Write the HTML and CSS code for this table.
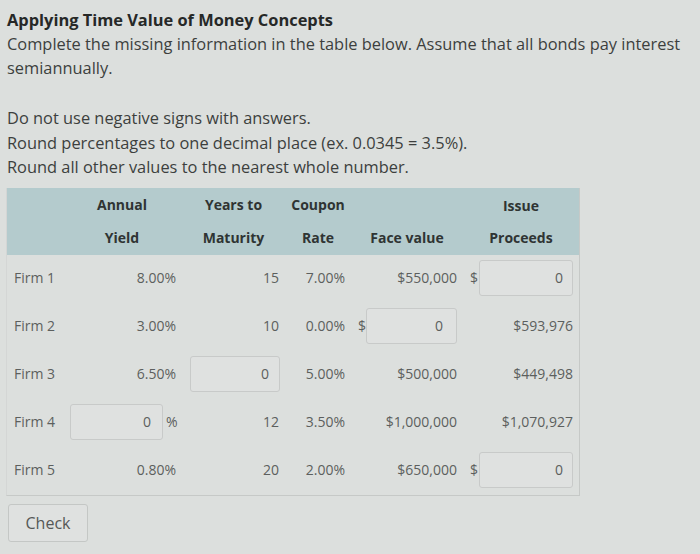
FILE: index.html
```html
<!DOCTYPE html>
<html>
<head>
<meta charset="utf-8">
<link rel="stylesheet" href="styles.css">
</head>
<body>
<div class="page">
  <div class="intro">
    <div class="title">Applying Time Value of Money Concepts</div>
    <div class="line">Complete the missing information in the table below. Assume that all bonds pay interest semiannually.</div>
    <div class="rules">
      <div>Do not use negative signs with answers.</div>
      <div>Round percentages to one decimal place (ex. 0.0345 = 3.5%).</div>
      <div>Round all other values to the nearest whole number.</div>
    </div>
  </div>

  <div class="tbl">
    <div class="head">
      <div class="hc"></div>
      <div class="hc">Annual</div>
      <div class="hc">Years to</div>
      <div class="hc">Coupon</div>
      <div class="hc"></div>
      <div class="hc issue">Issue</div>
      <div class="hc"></div>
      <div class="hc">Yield</div>
      <div class="hc">Maturity</div>
      <div class="hc">Rate</div>
      <div class="hc">Face value</div>
      <div class="hc">Proceeds</div>
    </div>

    <div class="row">
      <div class="c firm">Firm 1</div>
      <div class="c num">8.00%</div>
      <div class="c num">15</div>
      <div class="c num">7.00%</div>
      <div class="c num">$550,000</div>
      <div class="c money"><span class="cur">$</span><span class="inp">0</span></div>
    </div>
    <div class="row">
      <div class="c firm">Firm 2</div>
      <div class="c num">3.00%</div>
      <div class="c num">10</div>
      <div class="c num">0.00%</div>
      <div class="c money face"><span class="cur">$</span><span class="inp">0</span></div>
      <div class="c num">$593,976</div>
    </div>
    <div class="row">
      <div class="c firm">Firm 3</div>
      <div class="c num">6.50%</div>
      <div class="c num yrs"><span class="inp small">0</span></div>
      <div class="c num">5.00%</div>
      <div class="c num">$500,000</div>
      <div class="c num">$449,498</div>
    </div>
    <div class="row">
      <div class="c firm">Firm 4</div>
      <div class="c num pct"><span class="inp">0</span><span class="unit">%</span></div>
      <div class="c num">12</div>
      <div class="c num">3.50%</div>
      <div class="c num">$1,000,000</div>
      <div class="c num">$1,070,927</div>
    </div>
    <div class="row">
      <div class="c firm">Firm 5</div>
      <div class="c num">0.80%</div>
      <div class="c num">20</div>
      <div class="c num">2.00%</div>
      <div class="c num">$650,000</div>
      <div class="c money"><span class="cur">$</span><span class="inp">0</span></div>
    </div>
  </div>

  <button class="check">Check</button>
</div>
</body>
</html>
```

FILE: styles.css
```css
html, body {
  margin: 0;
  padding: 0;
  background: #dcdfdd;
}
body {
  font-family: "Open Sans", "DejaVu Sans", sans-serif;
  color: #3a3c3b;
}
.page {
  padding: 8px 0 0 7px;
  width: 690px;
}
.intro {
  font-size: 16.4px;
  line-height: 24px;
}
.title {
  font-weight: 700;
  color: #262827;
}
.line {
  color: #3d3f3e;
}
.rules {
  margin-top: 26px;
  line-height: 24.5px;
  color: #3d3f3e;
}
.tbl {
  margin-top: 8px;
  width: 572px;
  border-right: 1px solid #c6c9c7;
  border-bottom: 1px solid #c6c9c7;
  border-left: 1px solid #d4d6d5;
  margin-left: -1px;
}
.head {
  display: grid;
  grid-template-columns: 55px 120px 103px 66px 112px 116px;
  grid-template-rows: 33px 34px;
  background: #b4cbcd;
  font-weight: 700;
  font-size: 14px;
  color: #2f3433;
}
.hc {
  display: flex;
  align-items: center;
  justify-content: center;
}
.hc.issue {
  padding-top: 3px;
}
.row {
  display: grid;
  grid-template-columns: 55px 120px 103px 66px 112px 116px;
  height: 48px;
  padding-bottom: 2px;
  box-sizing: border-box;
  font-size: 14px;
  color: #5c5f5e;
}
.c {
  display: flex;
  align-items: center;
}
.firm {
  padding-left: 7px;
}
.num {
  justify-content: flex-end;
  padding-right: 6px;
}
.money {
  padding-left: 7px;
  padding-right: 6px;
}
.money .cur {
  margin-right: auto;
}
.inp {
  box-sizing: border-box;
  width: 94px;
  height: 36px;
  border: 1px solid #c8cac9;
  border-radius: 3px;
  background: #dfe1e0;
  display: flex;
  align-items: center;
  justify-content: flex-end;
  padding-right: 9px;
}
.face .inp {
  width: 92px;
  padding-right: 13px;
}
.inp.small {
  width: 90px;
  padding-right: 10px;
}
.yrs {
  padding-right: 5px;
}
.pct .inp {
  width: 93px;
  padding-right: 11px;
}
.pct .unit {
  margin-left: 3px;
  width: 10px;
}
.check {
  display: block;
  margin-top: 8px;
  margin-left: 1px;
  width: 80px;
  height: 38px;
  border: 1px solid #c4c7c5;
  border-radius: 3px;
  background: #dfe1e0;
  font-family: "Open Sans", "DejaVu Sans", sans-serif;
  font-size: 16px;
  color: #555857;
  padding: 0;
}
```
